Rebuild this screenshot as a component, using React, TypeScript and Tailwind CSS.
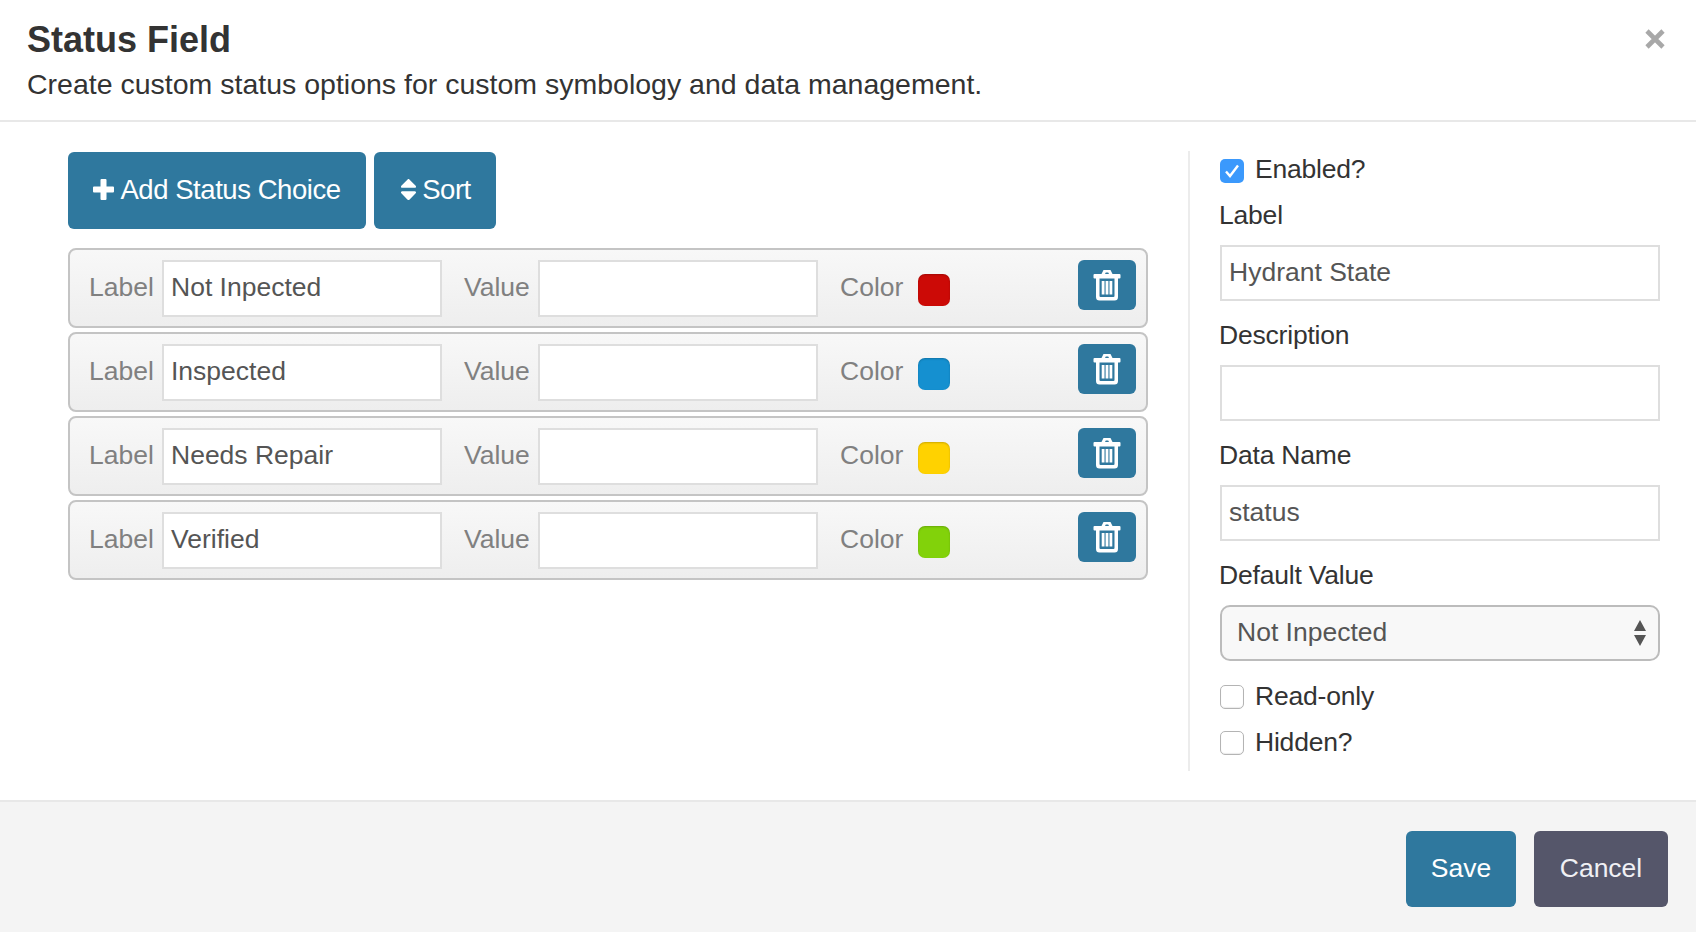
import { FaSort } from "react-icons/fa";

const rows = [
    { label: "Not Inpected", color: "bg-[#cc0a06]" },
    { label: "Inspected", color: "bg-[#1590d0]" },
    { label: "Needs Repair", color: "bg-[#ffd200]" },
    { label: "Verified", color: "bg-[#82d20a]" },
];

const TrashIcon = () => (
    <svg width="28" height="32" viewBox="0 0 28 32" fill="white">
        <path d="M8.5 5 L10.5 1 H17.5 L19.5 5 H26.5 A1 1 0 0 1 27.5 6 V8.5 A1 1 0 0 1 26.5 9.5 H25 V28 A3.5 3.5 0 0 1 21.5 31.5 H6.5 A3.5 3.5 0 0 1 3 28 V9.5 H1.5 A1 1 0 0 1 .5 8.5 V6 A1 1 0 0 1 1.5 5 Z M12 5 H16 L15.2 3.4 H12.8 Z M6.5 9.5 V27 A1 1 0 0 0 7.5 28 H20.5 A1 1 0 0 0 21.5 27 V9.5 Z" fillRule="evenodd" />
        <rect x="8.7" y="12" width="2.8" height="13.5" />
        <rect x="12.6" y="12" width="2.8" height="13.5" />
        <rect x="16.5" y="12" width="2.8" height="13.5" />
    </svg>
);

const PlusIcon = () => (
    <svg width="21" height="21" viewBox="0 0 21 21" fill="white">
        <path d="M7.5 1 A1 1 0 0 1 8.5 0 H12.5 A1 1 0 0 1 13.5 1 V7.5 H20 A1 1 0 0 1 21 8.5 V12.5 A1 1 0 0 1 20 13.5 H13.5 V20 A1 1 0 0 1 12.5 21 H8.5 A1 1 0 0 1 7.5 20 V13.5 H1 A1 1 0 0 1 0 12.5 V8.5 A1 1 0 0 1 1 7.5 H7.5 Z" />
    </svg>
);

const Check = ({ on }: { on?: boolean }) =>
    on ? (
        <span className="w-6 h-6 rounded-[5px] bg-[#3b99fc] flex items-center justify-center shrink-0">
            <svg width="16" height="14" viewBox="0 0 16 14" fill="none" stroke="white" strokeWidth="2.4">
                <path d="M2 7.5 L6 12 L14 1.5" />
            </svg>
        </span>
    ) : (
        <span className="w-6 h-6 rounded-[5px] bg-white border border-[#b4b4b4] shadow-[inset_0_-1px_1px_rgba(0,0,0,0.08)] shrink-0" />
    );

const Field = ({ label, value }: { label: string; value: string }) => (
    <div>
        <div className="h-[40px] -ml-px flex items-center text-[#333]">{label}</div>
        <div className="mt-[9px] h-14 border-2 border-[#dedede] flex items-center px-[7px] text-[#555] tracking-normal">{value}</div>
    </div>
);

const App = () => {
    return (
        <div className="w-[1696px] h-[932px] overflow-hidden bg-white flex flex-col text-[26.5px] font-['Liberation_Sans',Arial,sans-serif]">
            <header className="h-[122px] shrink-0 border-b-2 border-[#e8e8e8] pl-[27px] pr-[31px] pt-[18px] flex justify-between">
                <div>
                    <h1 className="text-[36px] leading-[44px] font-bold text-[#333]">Status Field</h1>
                    <p className="mt-[4px] text-[28.5px] text-[#333] leading-[36px]">
                        Create custom status options for custom symbology and data management.
                    </p>
                </div>
                <svg className="mt-[11px]" width="20" height="20" viewBox="0 0 20 20" stroke="#a8a8a8" strokeWidth="4.6">
                    <path d="M2 2 L18 18 M18 2 L2 18" />
                </svg>
            </header>

            <main className="h-[678px] shrink-0 flex pt-[30px]">
                <section className="w-[1188px] shrink-0 pl-[68px] pr-[40px]">
                    <div className="flex gap-2 text-white text-[27.5px] tracking-[-0.45px]">
                        <button className="w-[298px] h-[77px] pb-[2px] rounded-md bg-[#2f789e] flex items-center justify-center gap-[6px]">
                            <PlusIcon />
                            Add Status Choice
                        </button>
                        <button className="w-[122px] h-[77px] pb-[2px] pr-[4px] rounded-md bg-[#2f789e] flex items-center justify-center">
                            <FaSort size={27} />
                            Sort
                        </button>
                    </div>
                    <div className="mt-[19px] flex flex-col gap-1">
                        {rows.map((row) => (
                            <div
                                key={row.label}
                                className="h-20 rounded-lg border-2 border-[#c4c4c4] bg-gradient-to-b from-[#f8f8f8] to-[#eeeeee] flex items-center pl-[19px] pr-[10px]"
                            >
                                <span className="w-[73px] shrink-0 text-[#808080]">Label</span>
                                <div className="w-[280px] h-[57px] shrink-0 bg-white border-2 border-[#dedede] flex items-center px-[7px] text-[#555]">
                                    {row.label}
                                </div>
                                <span className="ml-[22px] w-[74px] shrink-0 text-[#808080]">Value</span>
                                <div className="w-[280px] h-[57px] shrink-0 bg-white border-2 border-[#dedede]" />
                                <span className="ml-[22px] w-[78px] shrink-0 text-[#808080]">Color</span>
                                <span className={`w-8 h-8 mt-[4px] shrink-0 rounded-[7px] ${row.color} shadow-[inset_0_1px_2px_rgba(0,0,0,0.2)]`} />
                                <button className="ml-auto w-[58px] h-[50px] -mt-[6px] rounded-md bg-[#2f789e] flex items-center justify-center">
                                    <TrashIcon />
                                </button>
                            </div>
                        ))}
                    </div>
                </section>

                <aside className="w-[472px] h-[620px] -mt-px shrink-0 border-l-2 border-[#ececec] pl-[30px] text-[#333] tracking-[-0.2px]">
                    <div className="flex items-center gap-[11px] h-9 mt-[2px]">
                        <Check on />
                        <span className="-mt-[2px]">Enabled?</span>
                    </div>
                    <div className="mt-[7px]">
                        <Field label="Label" value="Hydrant State" />
                    </div>
                    <div className="mt-[15px]">
                        <Field label="Description" value="" />
                    </div>
                    <div className="mt-[15px]">
                        <Field label="Data Name" value="status" />
                    </div>
                    <div className="mt-[15px] h-[40px] -ml-px flex items-center">Default Value</div>
                    <div className="mt-[9px] h-14 rounded-[10px] border-2 border-[#bcbcbc] bg-[#f8f8f8] flex items-center justify-between pl-[15px] pr-[11px] text-[#555] tracking-normal">
                        Not Inpected
                        <svg width="14" height="28" viewBox="0 0 14 28" fill="#555">
                            <path d="M7 1 L13 12 H1 Z M1 16 H13 L7 27 Z" />
                        </svg>
                    </div>
                    <div className="mt-[18px] flex items-center gap-[11px] h-9">
                        <Check />
                        Read-only
                    </div>
                    <div className="mt-[10px] flex items-center gap-[11px] h-9">
                        <Check />
                        Hidden?
                    </div>
                </aside>
            </main>

            <footer className="flex-1 bg-[#f4f4f4] border-t-2 border-[#e8e8e8] flex justify-end items-start gap-[18px] pt-[29px] pr-[28px]">
                <button className="w-[110px] h-[76px] rounded-md bg-[#2f789e] text-white">Save</button>
                <button className="w-[134px] h-[76px] rounded-md bg-[#55566a] text-[#f0f0f4]">Cancel</button>
            </footer>
        </div>
    );
};

export default App;
